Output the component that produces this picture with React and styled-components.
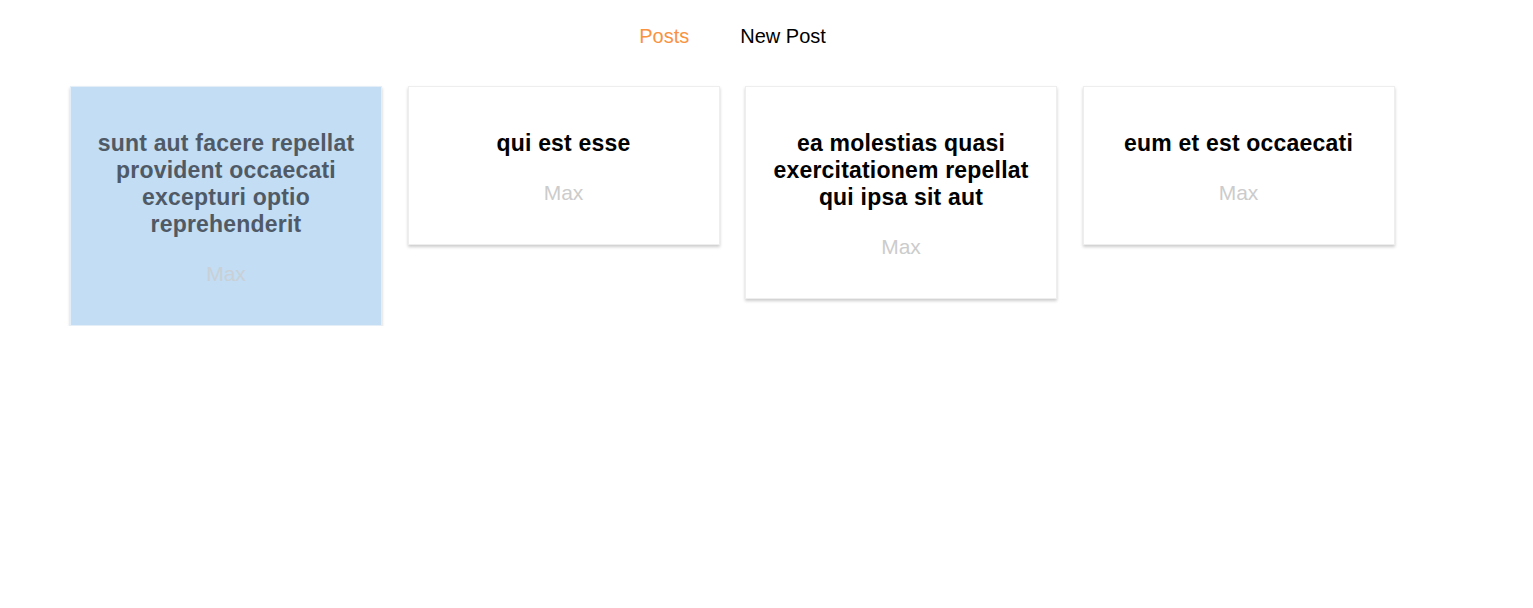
import React from 'react';
import styled, { createGlobalStyle } from 'styled-components';

const posts = [
	{ id: 1, title: 'sunt aut facere repellat provident occaecati excepturi optio reprehenderit', author: 'Max' },
	{ id: 2, title: 'qui est esse', author: 'Max' },
	{ id: 3, title: 'ea molestias quasi exercitationem repellat qui ipsa sit aut', author: 'Max' },
	{ id: 4, title: 'eum et est occaecati', author: 'Max' },
];

const App = () => {
	return (
		<>
			<GlobalStyle />
			<Blog>
				<Nav>
					<NavList>
						<NavItem active>Posts</NavItem>
						<NavItem>New Post</NavItem>
					</NavList>
				</Nav>
				<Posts>
					{posts.map((post, i) => (
						<Post key={post.id} selected={i === 0}>
							<Title selected={i === 0}>{post.title}</Title>
							<Author selected={i === 0}>{post.author}</Author>
						</Post>
					))}
				</Posts>
			</Blog>
		</>
	);
};

const GlobalStyle = createGlobalStyle`
	body {
		margin: 8px;
		background: #fff;
		font-family: "Liberation Sans", Arial, sans-serif;
	}
`;

const Blog = styled.div`
	display: flex;
	flex-direction: column;
`;

const Nav = styled.header`
	display: flex;
	justify-content: center;
	padding-right: 68px;
`;

const NavList = styled.ul`
	display: flex;
	gap: 51px;
	list-style: none;
	margin: 0;
	padding: 16px 0 0;
`;

const NavItem = styled.li`
	font-size: 20px;
	line-height: 24px;
	color: ${(props) => (props.active ? '#fa923f' : '#000')};
	cursor: pointer;
`;

const Posts = styled.section`
	display: flex;
	align-items: flex-start;
	gap: 25.5px;
	padding: 38px 0 0 62px;
`;

const Post = styled.article`
	box-sizing: border-box;
	width: 312px;
	padding: 43px 16px 39px;
	text-align: center;
	border: 1px solid;
	border-color: ${(props) => (props.selected ? '#e4eef7' : '#eee')};
	box-shadow: 0 2px 3px #ccc;
	background: ${(props) => (props.selected ? '#c2ddf4' : '#fff')};
`;

const Title = styled.h1`
	margin: 0;
	font-size: 23px;
	line-height: 27px;
	font-weight: bold;
	letter-spacing: 0.2px;
	color: ${(props) => (props.selected ? '#4f5a66' : '#000')};
`;

const Author = styled.div`
	margin-top: 23px;
	font-size: 21px;
	line-height: 25px;
	color: ${(props) => (props.selected ? '#c9d0d6' : '#ccc')};
`;

export default App;
